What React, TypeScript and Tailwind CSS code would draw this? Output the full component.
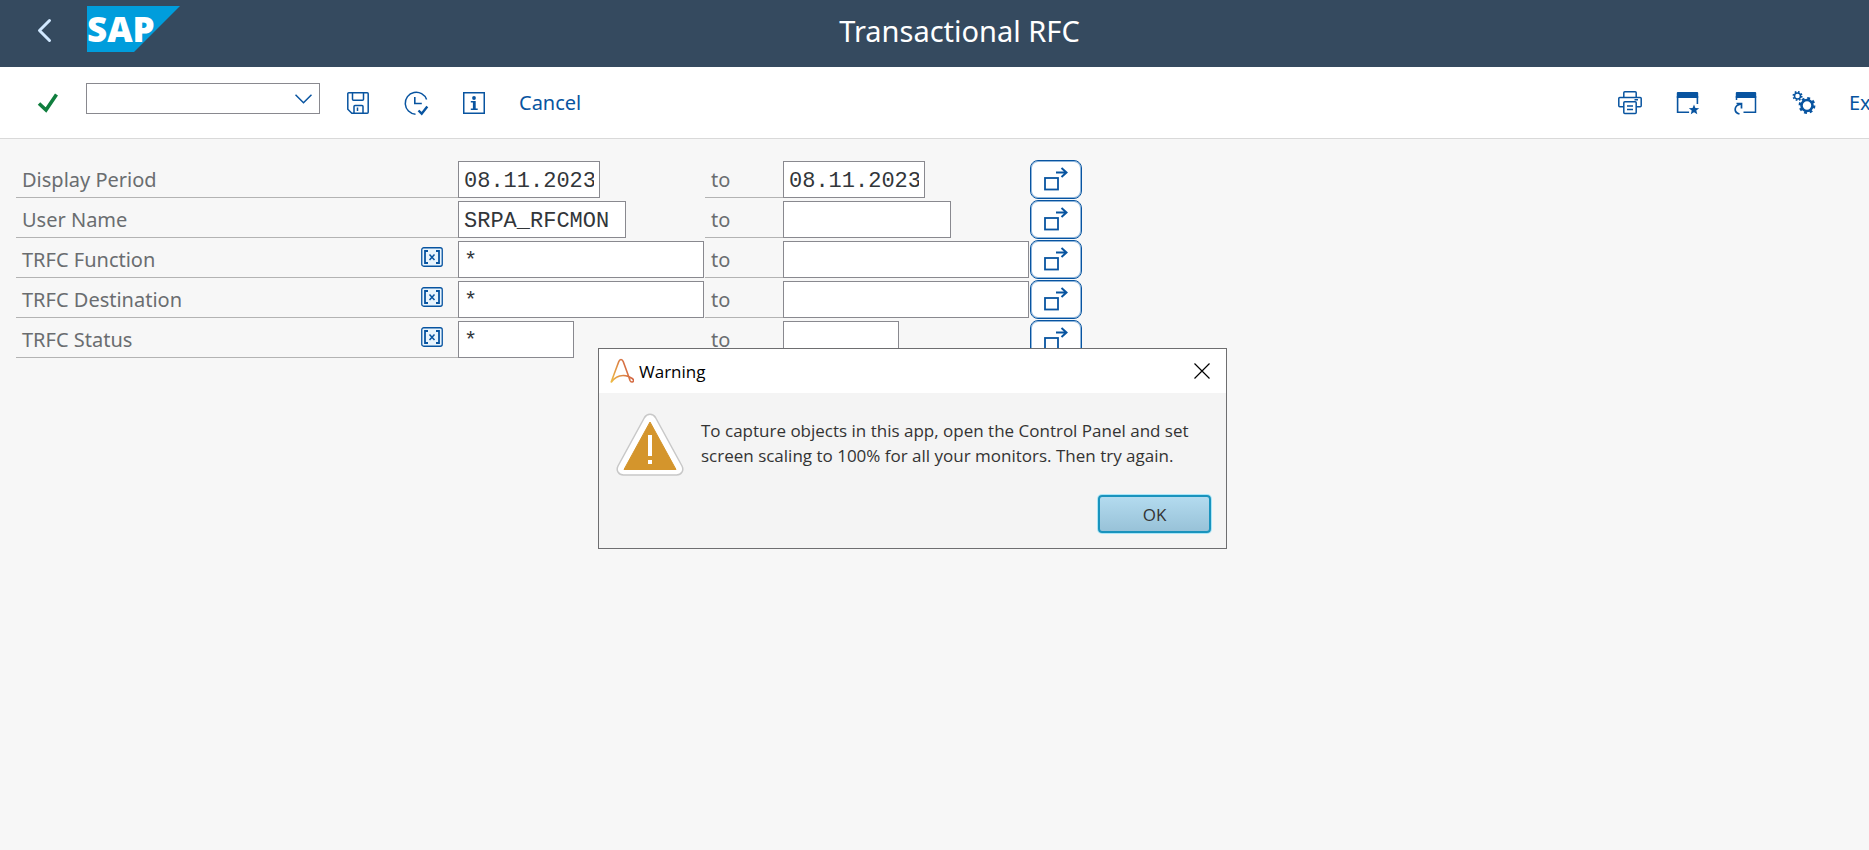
import { useState } from "react";
import type { ReactNode } from "react";

type Field = {
  id: string;
  label: string;
  from: string;
  to: string;
  width: string;
  pattern: boolean;
};

const fields: Field[] = [
  { id: "period", label: "Display Period", from: "08.11.2023", to: "08.11.2023", width: "w-[142px]", pattern: false },
  { id: "user", label: "User Name", from: "SRPA_RFCMON", to: "", width: "w-[168px]", pattern: false },
  { id: "function", label: "TRFC Function", from: "*", to: "", width: "w-[246px]", pattern: true },
  { id: "destination", label: "TRFC Destination", from: "*", to: "", width: "w-[246px]", pattern: true },
  { id: "status", label: "TRFC Status", from: "*", to: "", width: "w-[116px]", pattern: true },
];

const SapLogo = () => (
  <svg className="h-[46px] w-[93px]" viewBox="0 0 93 46" role="img" aria-label="SAP">
    <path d="M0 0h93L47 46H0z" fill="#009ddc" />
    <text x="0" y="36" fontSize="35" fontWeight="900" fill="#fff" className="font-['Noto_Sans',sans-serif]">
      SAP
    </text>
  </svg>
);

const SaveIcon = () => (
  <svg width="24" height="24" viewBox="0 0 24 24" fill="none" stroke="currentColor" strokeWidth="1.5">
    <path d="M2.8 1.8h18.4a1 1 0 0 1 1 1v18.4a1 1 0 0 1-1 1H5.8l-4-4V2.8a1 1 0 0 1 1-1z" />
    <path d="M6.5 1.8v6.4a1 1 0 0 0 1 1h9a1 1 0 0 0 1-1V1.8" />
    <path d="M8 22v-6.5a1 1 0 0 1 1-1h7a1 1 0 0 1 1 1V22M11.5 16.5V20" />
  </svg>
);

const ClockCheckIcon = () => (
  <svg width="26" height="26" viewBox="0 0 26 26" fill="none" stroke="currentColor">
    <path d="M12.5 24.2A11 11 0 1 1 23.6 9.500" strokeWidth="1.5" />
    <path d="M11.800 7v6.500h7" strokeWidth="1.6" />
    <path d="M15.5 20.5l3.2 3.2 5.6-7.2" strokeWidth="2.4" />
  </svg>
);

const InfoIcon = () => (
  <svg width="24" height="24" viewBox="0 0 24 24">
    <rect x="1.75" y="1.75" width="20.5" height="20.5" fill="none" stroke="currentColor" strokeWidth="1.5" />
    <circle cx="12" cy="7" r="1.9" fill="currentColor" />
    <path d="M8.800 10h4.900v7.500h2V19H8.800v-1.500h2.100v-6H8.800z" fill="currentColor" />
  </svg>
);

const PrinterIcon = () => (
  <svg width="26" height="26" viewBox="0 0 26 26" fill="none" stroke="currentColor" strokeWidth="1.5">
    <path d="M6.8 7.5V2.8a1 1 0 0 1 1-1h10.4a1 1 0 0 1 1 1v4.7" />
    <path d="M6.5 16.8H2.8a1 1 0 0 1-1-1V8.5a1 1 0 0 1 1-1h20.4a1 1 0 0 1 1 1v7.3a1 1 0 0 1-1 1h-3.7" />
    <rect x="6.8" y="11.8" width="12.4" height="11.7" rx="1" />
    <path d="M10 16h6M10 19.5h6M17.5 9.7h3.5" />
  </svg>
);

const WindowStarIcon = () => (
  <svg width="26" height="26" viewBox="0 0 26 26">
    <path d="M2.8 2h19.400a1 1 0 0 1 1 1v5H1.800V3a1 1 0 0 1 1-1z" fill="currentColor" />
    <path d="M2.600 6v16.200h11.500M22.400 6v8" fill="none" stroke="currentColor" strokeWidth="1.600" />
    <path d="M19 14.500l1.400 3.500 3.800.2-2.900 2.400 1 3.700-3.300-2.100-3.200 2.100.9-3.700-2.900-2.400 3.800-.2z" fill="currentColor" />
  </svg>
);

const WindowArrowIcon = () => (
  <svg width="26" height="26" viewBox="0 0 26 26">
    <path d="M3.800 2h18.400a1 1 0 0 1 1 1v5H2.800V3a1 1 0 0 1 1-1z" fill="currentColor" />
    <path d="M3.500 6v4M22.500 6v16.200H10.500" fill="none" stroke="currentColor" strokeWidth="1.500" />
    <path d="M6.500 24c-6-1.500-6-8.500 1.500-10M3.500 13.500h5v5" fill="none" stroke="currentColor" strokeWidth="1.700" />
  </svg>
);

const GearsIcon = () => (
  <svg width="26" height="26" viewBox="0 0 26 26" fill="none" stroke="currentColor">
    <circle cx="16" cy="15.5" r="5.5" strokeWidth="2.6" />
    <circle cx="16" cy="15.5" r="7.200" strokeWidth="2.400" strokeDasharray="2.830 2.830" />
    <circle cx="6.500" cy="6" r="3" strokeWidth="1.500" />
    <circle cx="6.500" cy="6" r="4.200" strokeWidth="1.700" strokeDasharray="1.650 1.650" />
  </svg>
);

const PatternIcon = () => (
  <svg className="mb-1 h-5 w-[22px]" viewBox="0 0 22 20" fill="none" stroke="#0854a0" role="img" aria-label="Pattern">
    <rect x="0.75" y="0.75" width="20.5" height="18.5" rx="2" fill="#e8f4fd" strokeWidth="1.3" />
    <path d="M7 4H4v12h3M15 4h3v12h-3" strokeWidth="1.8" />
    <path d="M8.500 7.500l5 5.500M13.500 7.500l-5 5.500" strokeWidth="1.5" />
  </svg>
);

const MultiSelectIcon = () => (
  <svg width="24" height="24" viewBox="0 0 24 24" fill="none" stroke="#0854a0" strokeWidth="2">
    <rect x="1" y="11" width="13" height="11.5" strokeWidth="1.8" />
    <path d="M12 5.500h11M17.500 1l5 4.500-5 4.500" />
  </svg>
);

const AppLogo = () => (
  <svg width="24" height="26" viewBox="0 0 24 26" fill="none">
    <defs>
      <linearGradient id="logo" x1="0" y1="1" x2="1" y2="0.6">
        <stop offset="0" stopColor="#eebc45" />
        <stop offset="1" stopColor="#cf5b43" />
      </linearGradient>
    </defs>
    <path
      d="M1 24.500L8.800 3.500C9.800.8 12.200.8 13.200 3.500L18.500 18l1.500 4.500c1 2.500 4 1.500 3.500-.5s-3-2.500-5-3.500C13 16.500 6 17.500 1 24.500"
      stroke="url(#logo)"
      strokeWidth="1.6"
    />
  </svg>
);

const WarningIcon = () => (
  <svg className="h-16 w-[68px] shrink-0" viewBox="0 0 68 64">
    <path
      d="M28.500 4.500C31 .2 37 .2 39.500 4.500L66 53c2.200 4.500-.5 9-5.500 9h-53C2.500 62-.2 57.500 2 53z"
      fill="#fff"
      stroke="#c8c8c8"
      strokeWidth="1.5"
    />
    <path d="M34 9l26 47.500H8z" fill="#d4952c" stroke="#d4952c" strokeWidth="1" strokeLinejoin="round" />
    <path d="M32 22h4v21h-4zM32 47h4v4h-4z" fill="#fff" />
  </svg>
);

const IconButton = ({ label, children }: { label: string; children: ReactNode }) => (
  <button type="button" aria-label={label} className="flex size-[26px] items-center justify-center">
    {children}
  </button>
);

const inputClass =
  "block h-[37px] rounded-none border border-[#89898f] bg-white px-[5px] pt-1 font-['Liberation_Mono',monospace] text-[22px] text-[#32363a] outline-none";

const SelectionRow = ({ field }: { field: Field }) => {
  const [from, setFrom] = useState(field.from);
  const [to, setTo] = useState(field.to);

  return (
    <div className="grid h-10 grid-cols-[442px_247px_78px_247px_52px] items-start">
      <div className="mt-px flex h-[37px] items-center justify-between border-b border-[#b3b3b3] pr-[15px] pl-[6px]">
        <label htmlFor={`${field.id}-from`} className="pt-[2px]">
          {field.label}
        </label>
        {field.pattern && <PatternIcon />}
      </div>
      <div className="mt-px">
        <input
          id={`${field.id}-from`}
          className={`${inputClass} ${field.width}`}
          value={from}
          onChange={(e) => setFrom(e.target.value)}
        />
      </div>
      <div className="mt-px flex h-[37px] items-center border-b border-[#b3b3b3] pl-[6px]">
        <label htmlFor={`${field.id}-to`} className="pt-[2px]">
          to
        </label>
      </div>
      <div className="mt-px">
        <input
          id={`${field.id}-to`}
          className={`${inputClass} ${field.width}`}
          value={to}
          onChange={(e) => setTo(e.target.value)}
        />
      </div>
      <button
        type="button"
        aria-label={`Multiple selection for ${field.label}`}
        className="flex h-[39px] items-center justify-center rounded-lg border border-[#0854a0] bg-white pb-px inset-ring inset-ring-[#8fb6dc]"
      >
        <MultiSelectIcon />
      </button>
    </div>
  );
};

const WarningDialog = () => (
  <div
    role="dialog"
    aria-labelledby="warning-title"
    className="absolute top-[348px] left-[598px] w-[629px] border border-[#6e6e70] bg-[#f4f4f4] font-['Open_Sans',sans-serif] text-[17px]"
  >
    <div className="flex h-11 items-center bg-white pr-4 pl-[11px]">
      <AppLogo />
      <h2 id="warning-title" className="ml-[5px] grow pt-[2px] text-black">
        Warning
      </h2>
      <button type="button" aria-label="Close" className="flex size-4 items-center justify-center">
        <svg width="16" height="16" viewBox="0 0 16 16" stroke="#000" strokeWidth="1.2">
          <path d="M.5.5l15 15M15.5.5l-15 15" />
        </svg>
      </button>
    </div>
    <div className="flex gap-4 pt-5 pl-[17px]">
      <WarningIcon />
      <p className="pt-[5px] pl-px leading-[25px] text-[#333]">
        To capture objects in this app, open the Control Panel and set
        <br />
        screen scaling to 100% for all your monitors. Then try again.
      </p>
    </div>
    <div className="flex justify-end pt-[18px] pr-[15px] pb-[15px]">
      <button
        type="button"
        className="h-[38px] w-[113px] rounded-sm border-2 border-[#1993bd] bg-linear-to-b from-[#b3dbef] to-[#98c2d8] pt-px text-[#333] ring-1 ring-[#a9e6f8]"
      >
        OK
      </button>
    </div>
  </div>
);

export default function App() {
  return (
    <div className="relative min-h-screen overflow-hidden bg-[#f7f7f7] font-['Noto_Sans',sans-serif] text-[20px] text-[#6a6d70]">
      <header className="flex h-[67px] items-center bg-[#354a5f] pr-[130px]">
        <button type="button" aria-label="Back" className="mb-[6px] ml-[37px]">
          <svg width="15" height="25" viewBox="0 0 15 25" fill="none" stroke="#d1e8ff" strokeWidth="3" strokeLinecap="round" strokeLinejoin="round">
            <path d="M12.5 2.5l-10 10 10 10" />
          </svg>
        </button>
        <a href="#home" className="mb-[9px] ml-[35px]">
          <SapLogo />
        </a>
        <h1 className="mb-[6px] grow text-center text-[29px] text-white">Transactional RFC</h1>
      </header>

      <div className="flex h-[72px] items-center overflow-hidden border-b border-[#d9d9d9] bg-white text-[#0854a0]">
        <button type="button" aria-label="Enter" className="ml-[37px]">
          <svg width="22" height="20" viewBox="0 0 22 20" fill="none" stroke="#107e3e" strokeWidth="3.6">
            <path d="M2 10.5l7 6.5L19.5 1.5" />
          </svg>
        </button>
        <div className="relative mb-2 ml-[27px]">
          <select
            aria-label="Command"
            className="block h-[31px] w-[234px] appearance-none border border-[#89898f] bg-white outline-none"
          >
            <option></option>
          </select>
          <svg className="pointer-events-none absolute top-[11px] right-2" width="17" height="10" viewBox="0 0 17 10" fill="none" stroke="currentColor" strokeWidth="1.5">
            <path d="M.5.8l8 8 8-8" />
          </svg>
        </div>
        <div className="ml-[25px] flex items-center gap-8">
          <IconButton label="Save"><SaveIcon /></IconButton>
          <IconButton label="Execute in background"><ClockCheckIcon /></IconButton>
          <IconButton label="Information"><InfoIcon /></IconButton>
          <button type="button" className="pt-px">Cancel</button>
        </div>
        {/* the last action runs past the window edge */}
        <div className="ml-auto flex w-[252px] shrink-0 items-center gap-8">
          <IconButton label="Print"><PrinterIcon /></IconButton>
          <IconButton label="New window"><WindowStarIcon /></IconButton>
          <IconButton label="Create shortcut"><WindowArrowIcon /></IconButton>
          <IconButton label="Settings"><GearsIcon /></IconButton>
          <button type="button" className="pt-px">Exit</button>
        </div>
      </div>

      <main className="flex flex-col pt-[21px] pl-4">
        {fields.map((field) => (
          <SelectionRow key={field.id} field={field} />
        ))}
      </main>

      <WarningDialog />
    </div>
  );
}
